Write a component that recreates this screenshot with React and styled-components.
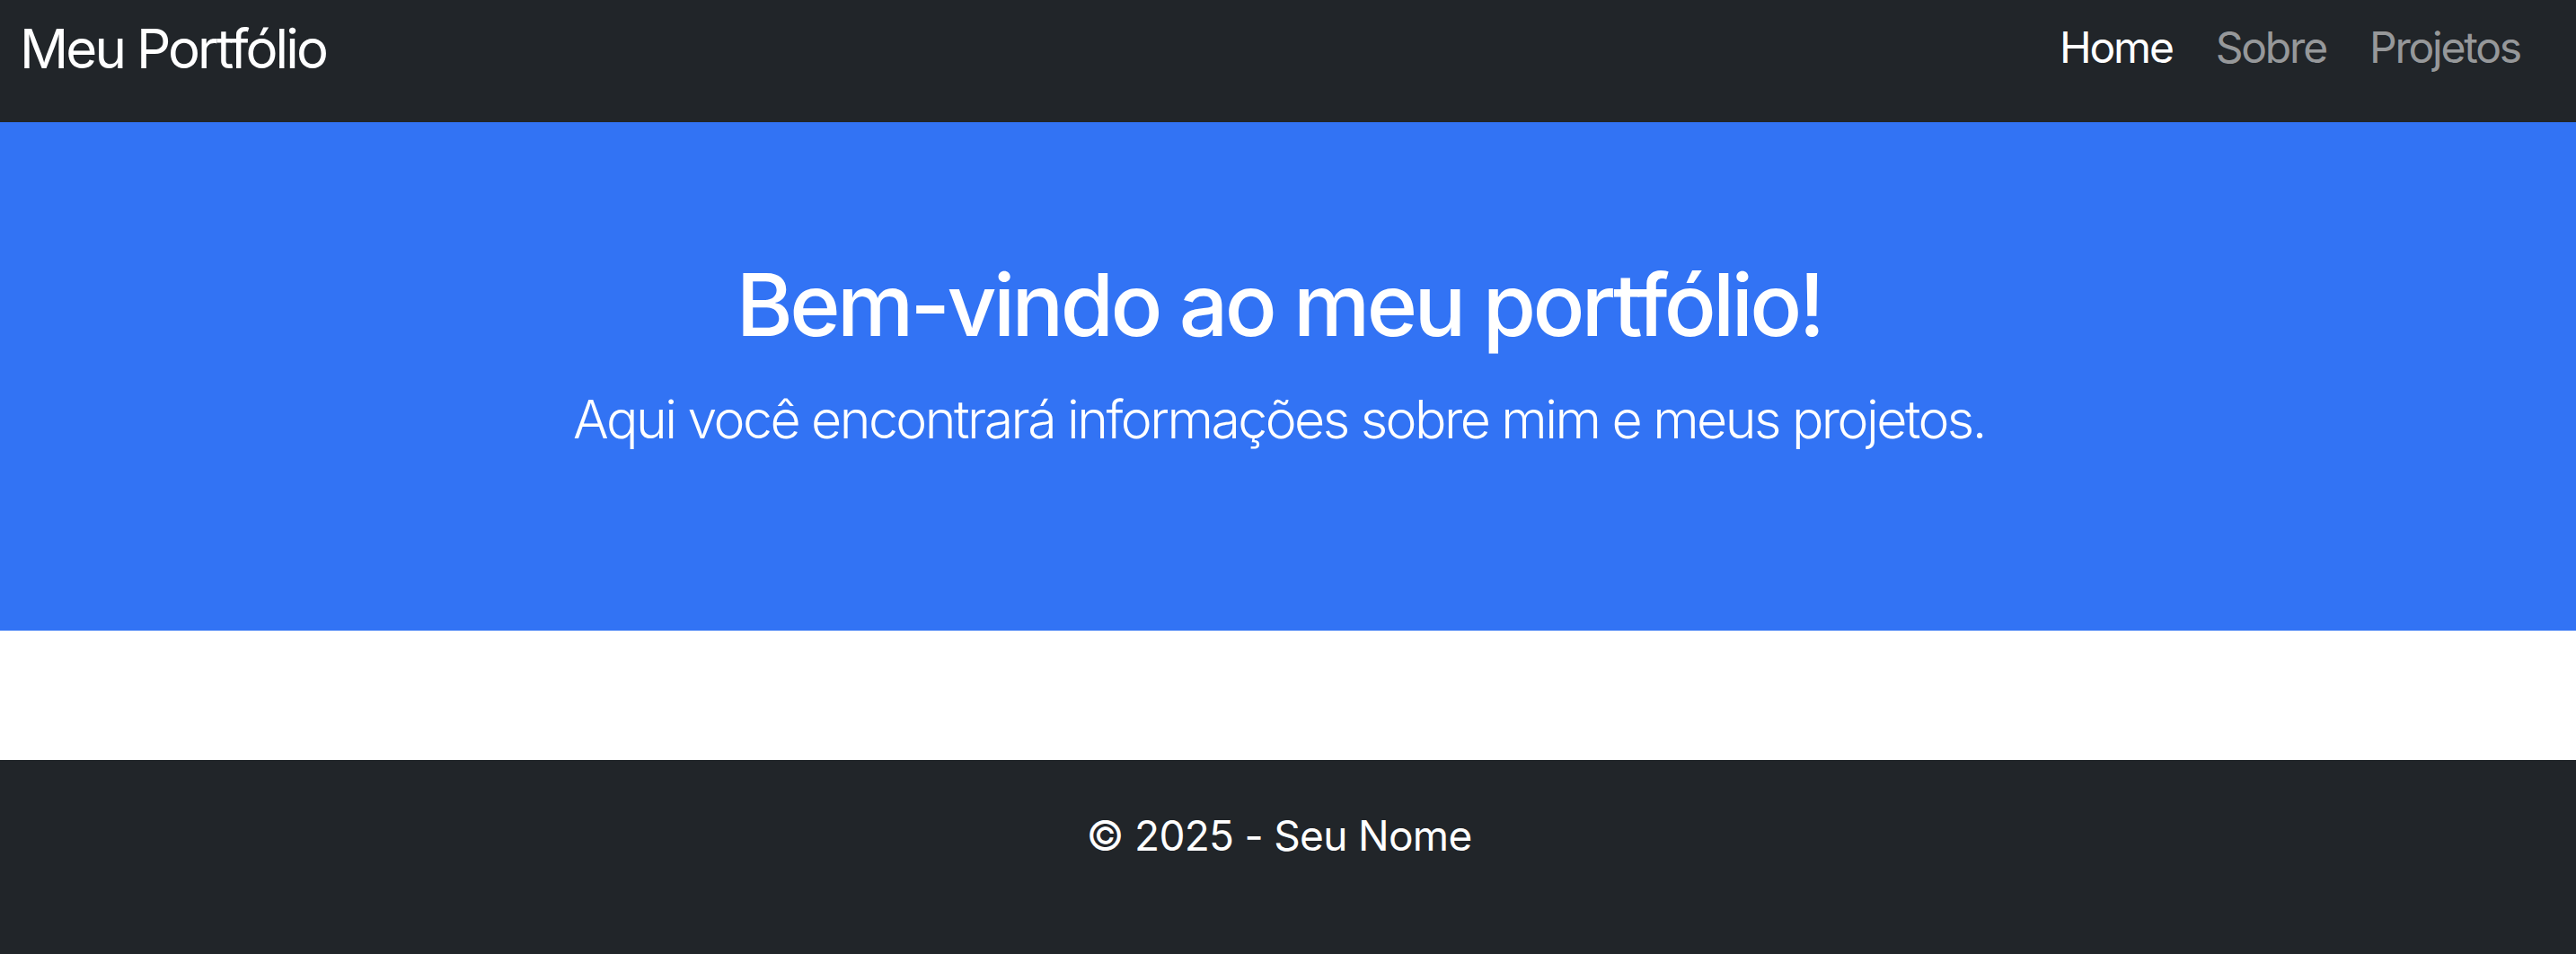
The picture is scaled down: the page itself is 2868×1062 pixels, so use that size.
import styled, { createGlobalStyle } from "styled-components"

const GlobalStyle = createGlobalStyle`
html, body {
  margin: 0;
  padding: 0;
  background: #FFF;
}
body {
  font-family: Inter, "Noto Sans", "Liberation Sans", sans-serif;
}
`

const links = [
    { label: "Home", active: true },
    { label: "Sobre" },
    { label: "Projetos" },
]

function App() {
    return (
        <MainLayout>
            <GlobalStyle />

            <Navbar>
                <Brand href="#">Meu Portfólio</Brand>
                <NavList>
                    {links.map((link) => (
                        <NavItem key={link.label}>
                            <NavLink href="#" $active={link.active}>{link.label}</NavLink>
                        </NavItem>
                    ))}
                </NavList>
            </Navbar>

            <Hero>
                <Title>Bem-vindo ao meu portfólio!</Title>
                <Lead>Aqui você encontrará informações sobre mim e meus projetos.</Lead>
            </Hero>

            <Spacer />

            <Footer>
                <FooterText>© 2025 - Seu Nome</FooterText>
            </Footer>
        </MainLayout>
    )
}

export default App

const MainLayout = styled.div`
display: flex;
flex-direction: column;
width: 100%;
`

const Navbar = styled.nav`
display: flex;
justify-content: space-between;
align-items: flex-start;
height: 136px;
box-sizing: border-box;
padding: 0 38px 0 22px;
background: #212529;
`

const Brand = styled.a`
color: #FFF;
text-decoration: none;
font-size: 60px;
font-weight: 400;
line-height: 72px;
letter-spacing: -2.9px;
margin-top: 18px;
`

const NavList = styled.ul`
display: flex;
list-style: none;
margin: 24px 0 0;
padding: 0;
`

const NavItem = styled.li``

const NavLink = styled.a`
display: block;
padding: 0 24px;
color: ${({ $active }) => ($active ? "#FFF" : "rgba(255, 255, 255, 0.55)")};
text-decoration: none;
font-size: 48px;
font-weight: 400;
line-height: 58px;
letter-spacing: -2.2px;
`

const Hero = styled.section`
display: flex;
flex-direction: column;
align-items: center;
gap: 34px;
height: 566px;
box-sizing: border-box;
padding: 146px 20px 0 0;
background: #3273F4;
color: #FFF;
text-align: center;
`

const Title = styled.h1`
margin: 0;
font-size: 96px;
font-weight: 500;
line-height: 115px;
letter-spacing: -3.6px;
`

const Lead = styled.p`
margin: 0;
font-size: 59px;
font-weight: 300;
line-height: 71px;
letter-spacing: -2.55px;
`

const Spacer = styled.div`
height: 144px;
`

const Footer = styled.footer`
height: 216px;
box-sizing: border-box;
padding: 57px 20px 0 0;
background: #212529;
text-align: center;
`

const FooterText = styled.p`
margin: 0;
color: #FFF;
font-size: 46px;
font-weight: 400;
line-height: 55px;
letter-spacing: -0.7px;
`
